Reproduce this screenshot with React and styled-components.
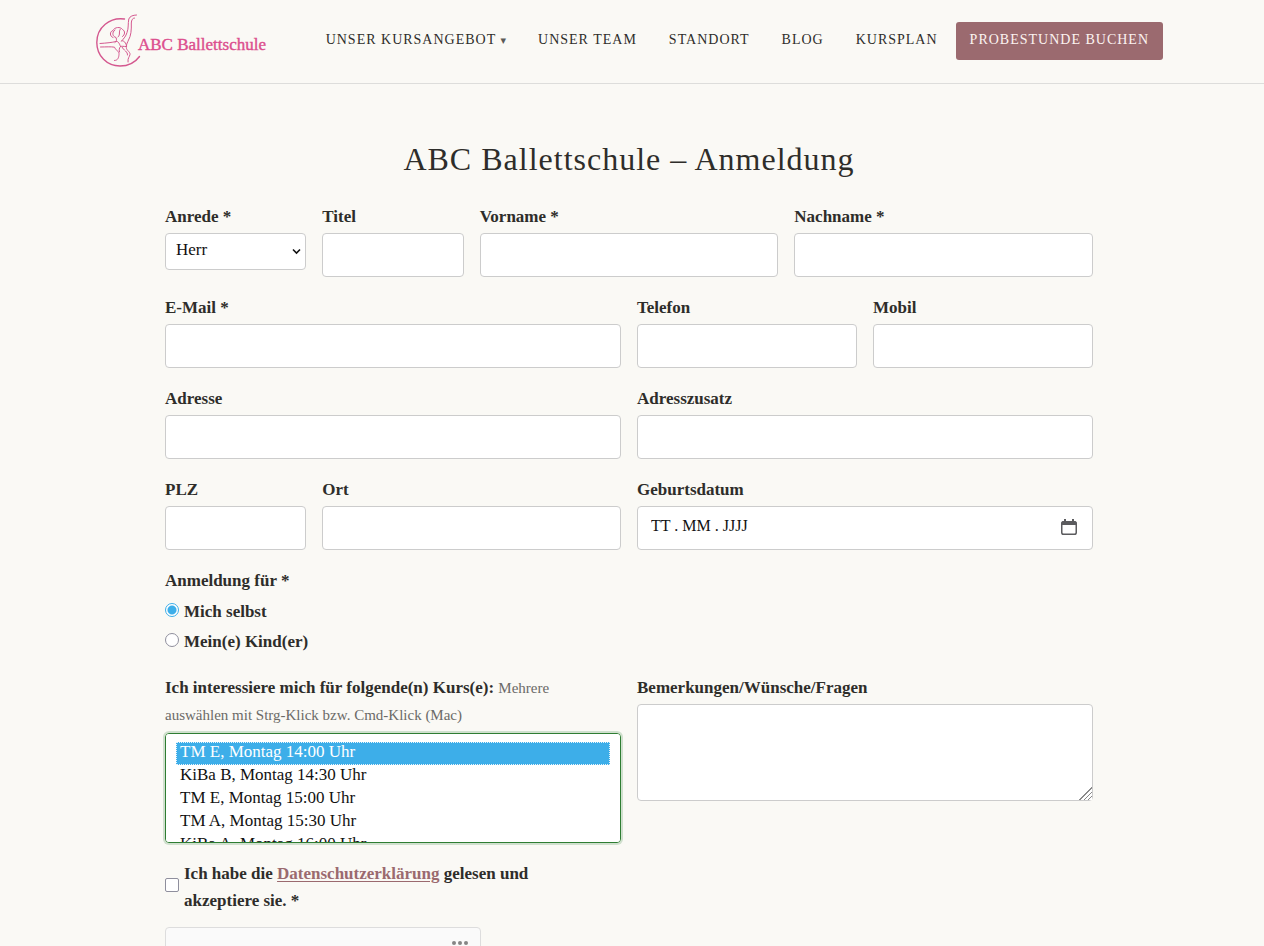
import React from "react";
import styled, { createGlobalStyle } from "styled-components";

const serif = `"Palatino Linotype", Palatino, "Liberation Serif", serif`;

const GlobalStyle = createGlobalStyle`
  *, *::before, *::after { box-sizing: border-box; }
  html { background: #faf9f5; scrollbar-width: none; }
  body {
    margin: 0;
    color: #2e2d2a;
    font-family: ${serif};
    font-size: 17px;
    line-height: 27px;
  }
`;

const Header = styled.header`
  border-bottom: 1px solid #dddddb;
`;

const HeaderInner = styled.div`
  display: flex;
  align-items: center;
  justify-content: space-between;
  min-height: 83px;
  padding: 0 101px 2px 94px;
`;

const Logo = styled.a`
  display: flex;
  align-items: center;
  padding-bottom: 2px;
  color: #dc4f8e;
  text-decoration: none;
`;

const Nav = styled.nav`
  display: flex;
  align-items: center;
  gap: 4px;
`;

const NavLink = styled.a`
  padding: 4px 14px 6px;
  border-radius: 3px;
  font-size: 14px;
  line-height: 28px;
  letter-spacing: 1px;
  text-transform: uppercase;
  text-decoration: none;
  white-space: nowrap;
  color: ${(p) => (p.$filled ? "#fbf3f1" : "#2e2d2a")};
  background: ${(p) => (p.$filled ? "#9b6a6f" : "transparent")};
`;

const Caret = styled.span`
  font-family: "DejaVu Sans", sans-serif;
  font-size: 11px;
  line-height: 1;
  letter-spacing: 0;
  color: #5c5b58;
`;

const Main = styled.main`
  padding: 52px 22px 0 16px;
`;

const Form = styled.form`
  display: grid;
  grid-template-columns: repeat(12, 1fr);
  gap: 17px 16px;
  align-items: start;
  max-width: 928px;
  margin: 0 auto;
`;

const Title = styled.h1`
  margin: 0 0 20px;
  font-family: "Liberation Serif", serif;
  font-size: 32px;
  font-weight: 400;
  line-height: 47px;
  letter-spacing: 1px;
  text-align: center;
`;

const Field = styled.div`
  grid-column: span ${(p) => p.$span};
  display: flex;
  flex-direction: column;
  gap: ${(p) => (p.$loose ? 5 : 3)}px;
  min-width: 0;
`;

const Label = styled.label`
  font-weight: 700;
`;

const CourseLabel = styled(Label)`
  padding-right: 24px;
`;

const Hint = styled.small`
  font-size: 15px;
  font-weight: 400;
  line-height: 1;
  color: #6b6a67;
`;

const Input = styled.input`
  width: 100%;
  height: 44px;
  padding: 0 13px 4px;
  border: 1px solid #ccc;
  border-radius: 4px;
  background: #fff;
  color: #111;
  font: 17px ${serif};
`;

const DateInput = styled(Input)`
  font-size: 16px;
  &::placeholder { color: #111; opacity: 1; }
`;

const SelectWrap = styled.div`
  display: grid;
  align-items: center;
  & > * { grid-area: 1 / 1; }
  & > svg { justify-self: end; margin-right: 5px; pointer-events: none; }
`;

const Select = styled.select`
  appearance: none;
  width: 100%;
  height: 37px;
  padding: 0 24px 4px 10px;
  border: 1px solid #ccc;
  border-radius: 4px;
  background: #fff;
  color: #111;
  font: 17px ${serif};
`;

const DateWrap = styled.div`
  display: grid;
  align-items: center;
  & > * { grid-area: 1 / 1; }
`;

const DateButton = styled.button`
  display: flex;
  justify-self: end;
  margin-right: 16px;
  padding: 0 0 2px;
  border: 0;
  background: none;
`;

const Group = styled.fieldset`
  grid-column: span 12;
  margin: 0;
  padding: 0 0 1px;
  border: 0;
`;

const Legend = styled.legend`
  margin-bottom: 2px;
  padding: 0;
  font-weight: 700;
`;

const Choice = styled.label`
  display: flex;
  align-items: center;
  gap: 5px;
  min-height: 30px;
  font-weight: 700;
`;

const Radio = styled.input`
  appearance: none;
  flex: none;
  width: 14px;
  height: 14px;
  margin: 0 0 3px;
  border: 1px solid #8f8f9d;
  border-radius: 50%;
  background: #fff;
  &:checked {
    border-color: #3daee9;
    background: radial-gradient(circle, #3daee9 4px, #fff 5px);
  }
`;

const Checkbox = styled.input`
  appearance: none;
  flex: none;
  width: 14px;
  height: 14px;
  margin: 0 0 4px;
  border: 1px solid #8f8f9d;
  border-radius: 2px;
  background: #fff;
`;

const CourseList = styled.select`
  width: 100%;
  height: 110px;
  padding: 8px 10px;
  border: 1px solid #2e7d32;
  border-radius: 4px;
  outline: none;
  box-shadow: 0 0 0 2px #d0e0ce;
  background: #fff;
  color: #111;
  font: 17px ${serif};
  scrollbar-width: none;
`;

const CourseOption = styled.option`
  min-height: 23px;
  padding: 0 4px 3px;
  line-height: 20px;
  &:checked {
    color: #fff;
    background: #3daee9 linear-gradient(#3daee9, #3daee9);
    outline: 1px dotted #e8f4fb;
    outline-offset: -1px;
  }
`;

const TextArea = styled.textarea`
  display: block;
  width: 100%;
  height: 97px;
  padding: 8px 13px;
  border: 1px solid #ccc;
  border-radius: 4px;
  background: #fff;
  font: 17px ${serif};
  resize: vertical;
  &::-webkit-resizer {
    background: linear-gradient(135deg, #fff 52%, transparent 52%),
      repeating-linear-gradient(135deg, #8a8a8a 0 1px, #fff 1px 3px);
  }
`;

const Consent = styled(Choice)`
  grid-column: span 5;
`;

const PrivacyLink = styled.a`
  color: #9b6a6f;
  text-decoration: underline;
  text-underline-offset: 2px;
`;

const Captcha = styled.div`
  grid-column: 1 / -1;
  display: flex;
  justify-content: flex-end;
  width: 316px;
  height: 72px;
  margin-top: -4px;
  padding: 13px 12px;
  border: 1px solid #ddd;
  border-radius: 4px;
  background: #fafafa;
`;

const CaptchaMenu = styled.button`
  align-self: flex-start;
  display: flex;
  gap: 2px;
  padding: 0;
  border: 0;
  background: none;
`;

const Dot = styled.span`
  width: 4px;
  height: 4px;
  border-radius: 50%;
  background: #858585;
`;

const courses = [
  "TM E, Montag 14:00 Uhr",
  "KiBa B, Montag 14:30 Uhr",
  "TM E, Montag 15:00 Uhr",
  "TM A, Montag 15:30 Uhr",
  "KiBa A, Montag 16:00 Uhr",
];

function DancerLogo() {
  return (
    <svg width="174" height="60" viewBox="0 0 174 60" fill="none" role="img" aria-label="ABC Ballettschule">
      <g stroke="#d4588f" strokeLinecap="round" strokeLinejoin="round">
        <path strokeWidth="1.4" d="M30.500 9C16 7 2.800 17 2.800 32.500C2.800 46 13 56 26 56C34.500 56 41.500 52 45.500 46.500" />
        <g strokeWidth="1">
          <path d="M42.500 5C39 5.200 36 6 34.800 9C33.800 14 34.800 18 33 22.500C32 26 30 28.500 27.500 31" />
          <path d="M40.500 8C38.500 8 37.500 10 37.300 13C37.500 20 37 26 34.500 30C33.500 32.500 32.500 34 32.500 35.500" />
          <path d="M19 27.500C15.500 26.500 15.500 21.500 19 20.500C20.500 17 26.500 16.500 28.500 19.500C31.500 21 31 25 28.500 26.500" />
          <path d="M21 20C17.500 22.500 18.500 26.500 22 27.500C23 30 22.500 31.500 21 32.500M26.500 19C24 21.500 27 24.500 24 27" />
          <path d="M6 33.500C13 33 18 32.500 22 31.500C24.500 31 25.500 34 26.500 36.500" />
          <path d="M6.500 37C12 37 17 36.500 20.500 37.200C21.500 40 25.500 41.500 25 44.500C24.700 47.500 24 50.500 20.500 50.500" />
          <path d="M27.500 31C28.500 29.500 32.500 32.500 32.500 36.500C29.500 36.500 27.500 36 26.500 36.500C25 38 25 40.500 25.500 42" />
          <path d="M32.500 36.500C31 40 36.500 41.500 36 44.500C35.500 47 33.500 48 34 52M28 37C29.500 40.500 34 41.500 33.500 45" />
        </g>
      </g>
      <text x="44" y="40" fill="#dc4f8e" stroke="#dc4f8e" strokeWidth="0.4" fontFamily='"Liberation Serif", serif' fontSize="17">
        ABC Ballettschule
      </text>
    </svg>
  );
}

function TextField({ id, label, span, type = "text" }) {
  return (
    <Field $span={span}>
      <Label htmlFor={id}>{label}</Label>
      <Input id={id} name={id} type={type} />
    </Field>
  );
}

export default function App() {
  return (
    <>
      <GlobalStyle />
      <Header>
        <HeaderInner>
          <Logo href="#start"><DancerLogo /></Logo>
          <Nav>
            <NavLink href="#kurse">Unser Kursangebot <Caret>▾</Caret></NavLink>
            <NavLink href="#team">Unser Team</NavLink>
            <NavLink href="#standort">Standort</NavLink>
            <NavLink href="#blog">Blog</NavLink>
            <NavLink href="#kursplan">Kursplan</NavLink>
            <NavLink href="#probestunde" $filled>Probestunde buchen</NavLink>
          </Nav>
        </HeaderInner>
      </Header>
      <Main>
        <Title>ABC Ballettschule – Anmeldung</Title>
        <Form onSubmit={(e) => e.preventDefault()}>
          <Field $span={2}>
            <Label htmlFor="anrede">Anrede *</Label>
            <SelectWrap>
              <Select id="anrede" defaultValue="Herr">
                <option>Herr</option>
                <option>Frau</option>
              </Select>
              <svg width="9" height="7" viewBox="0 0 9 7" fill="none" aria-hidden="true">
                <path d="M1 1.500L4.500 5L8 1.500" stroke="#111" strokeWidth="1.600" />
              </svg>
            </SelectWrap>
          </Field>
          <TextField id="titel" label="Titel" span={2} />
          <TextField id="vorname" label="Vorname *" span={4} />
          <TextField id="nachname" label="Nachname *" span={4} />
          <TextField id="email" label="E-Mail *" span={6} type="email" />
          <TextField id="telefon" label="Telefon" span={3} type="tel" />
          <TextField id="mobil" label="Mobil" span={3} type="tel" />
          <TextField id="adresse" label="Adresse" span={6} />
          <TextField id="adresszusatz" label="Adresszusatz" span={6} />
          <TextField id="plz" label="PLZ" span={2} />
          <TextField id="ort" label="Ort" span={4} />
          <Field $span={6}>
            <Label htmlFor="geburtsdatum">Geburtsdatum</Label>
            <DateWrap>
              <DateInput id="geburtsdatum" placeholder="TT . MM . JJJJ" />
              <DateButton type="button" aria-label="Kalender öffnen">
                <svg width="16" height="16" viewBox="0 0 16 16" fill="none" aria-hidden="true">
                  <rect x="0.750" y="2.750" width="14.500" height="12.500" rx="1.800" stroke="#5b5b5e" strokeWidth="1.500" />
                  <path d="M0.500 6V4C0.500 2.800 1.300 2 2.500 2H3V0H5V2H11V0H13V2H13.500C14.700 2 15.500 2.800 15.500 4V6Z" fill="#5b5b5e" />
                </svg>
              </DateButton>
            </DateWrap>
          </Field>
          <Group>
            <Legend>Anmeldung für *</Legend>
            <Choice><Radio type="radio" name="fuer" value="selbst" defaultChecked />Mich selbst</Choice>
            <Choice><Radio type="radio" name="fuer" value="kind" />Mein(e) Kind(er)</Choice>
          </Group>
          <Field $span={6} $loose>
            <CourseLabel htmlFor="kurse">
              Ich interessiere mich für folgende(n) Kurs(e):{" "}
              <Hint>Mehrere auswählen mit Strg-Klick bzw. Cmd-Klick (Mac)</Hint>
            </CourseLabel>
            <CourseList id="kurse" multiple defaultValue={[courses[0]]}>
              {courses.map((c) => <CourseOption key={c}>{c}</CourseOption>)}
            </CourseList>
          </Field>
          <Field $span={6}>
            <Label htmlFor="bemerkungen">Bemerkungen/Wünsche/Fragen</Label>
            <TextArea id="bemerkungen" />
          </Field>
          <Consent>
            <Checkbox type="checkbox" name="datenschutz" />
            <span>
              Ich habe die <PrivacyLink href="#datenschutz">Datenschutzerklärung</PrivacyLink> gelesen und akzeptiere sie. *
            </span>
          </Consent>
          <Captcha>
            <CaptchaMenu type="button" aria-label="Captcha-Optionen"><Dot /><Dot /><Dot /></CaptchaMenu>
          </Captcha>
        </Form>
      </Main>
    </>
  );
}
